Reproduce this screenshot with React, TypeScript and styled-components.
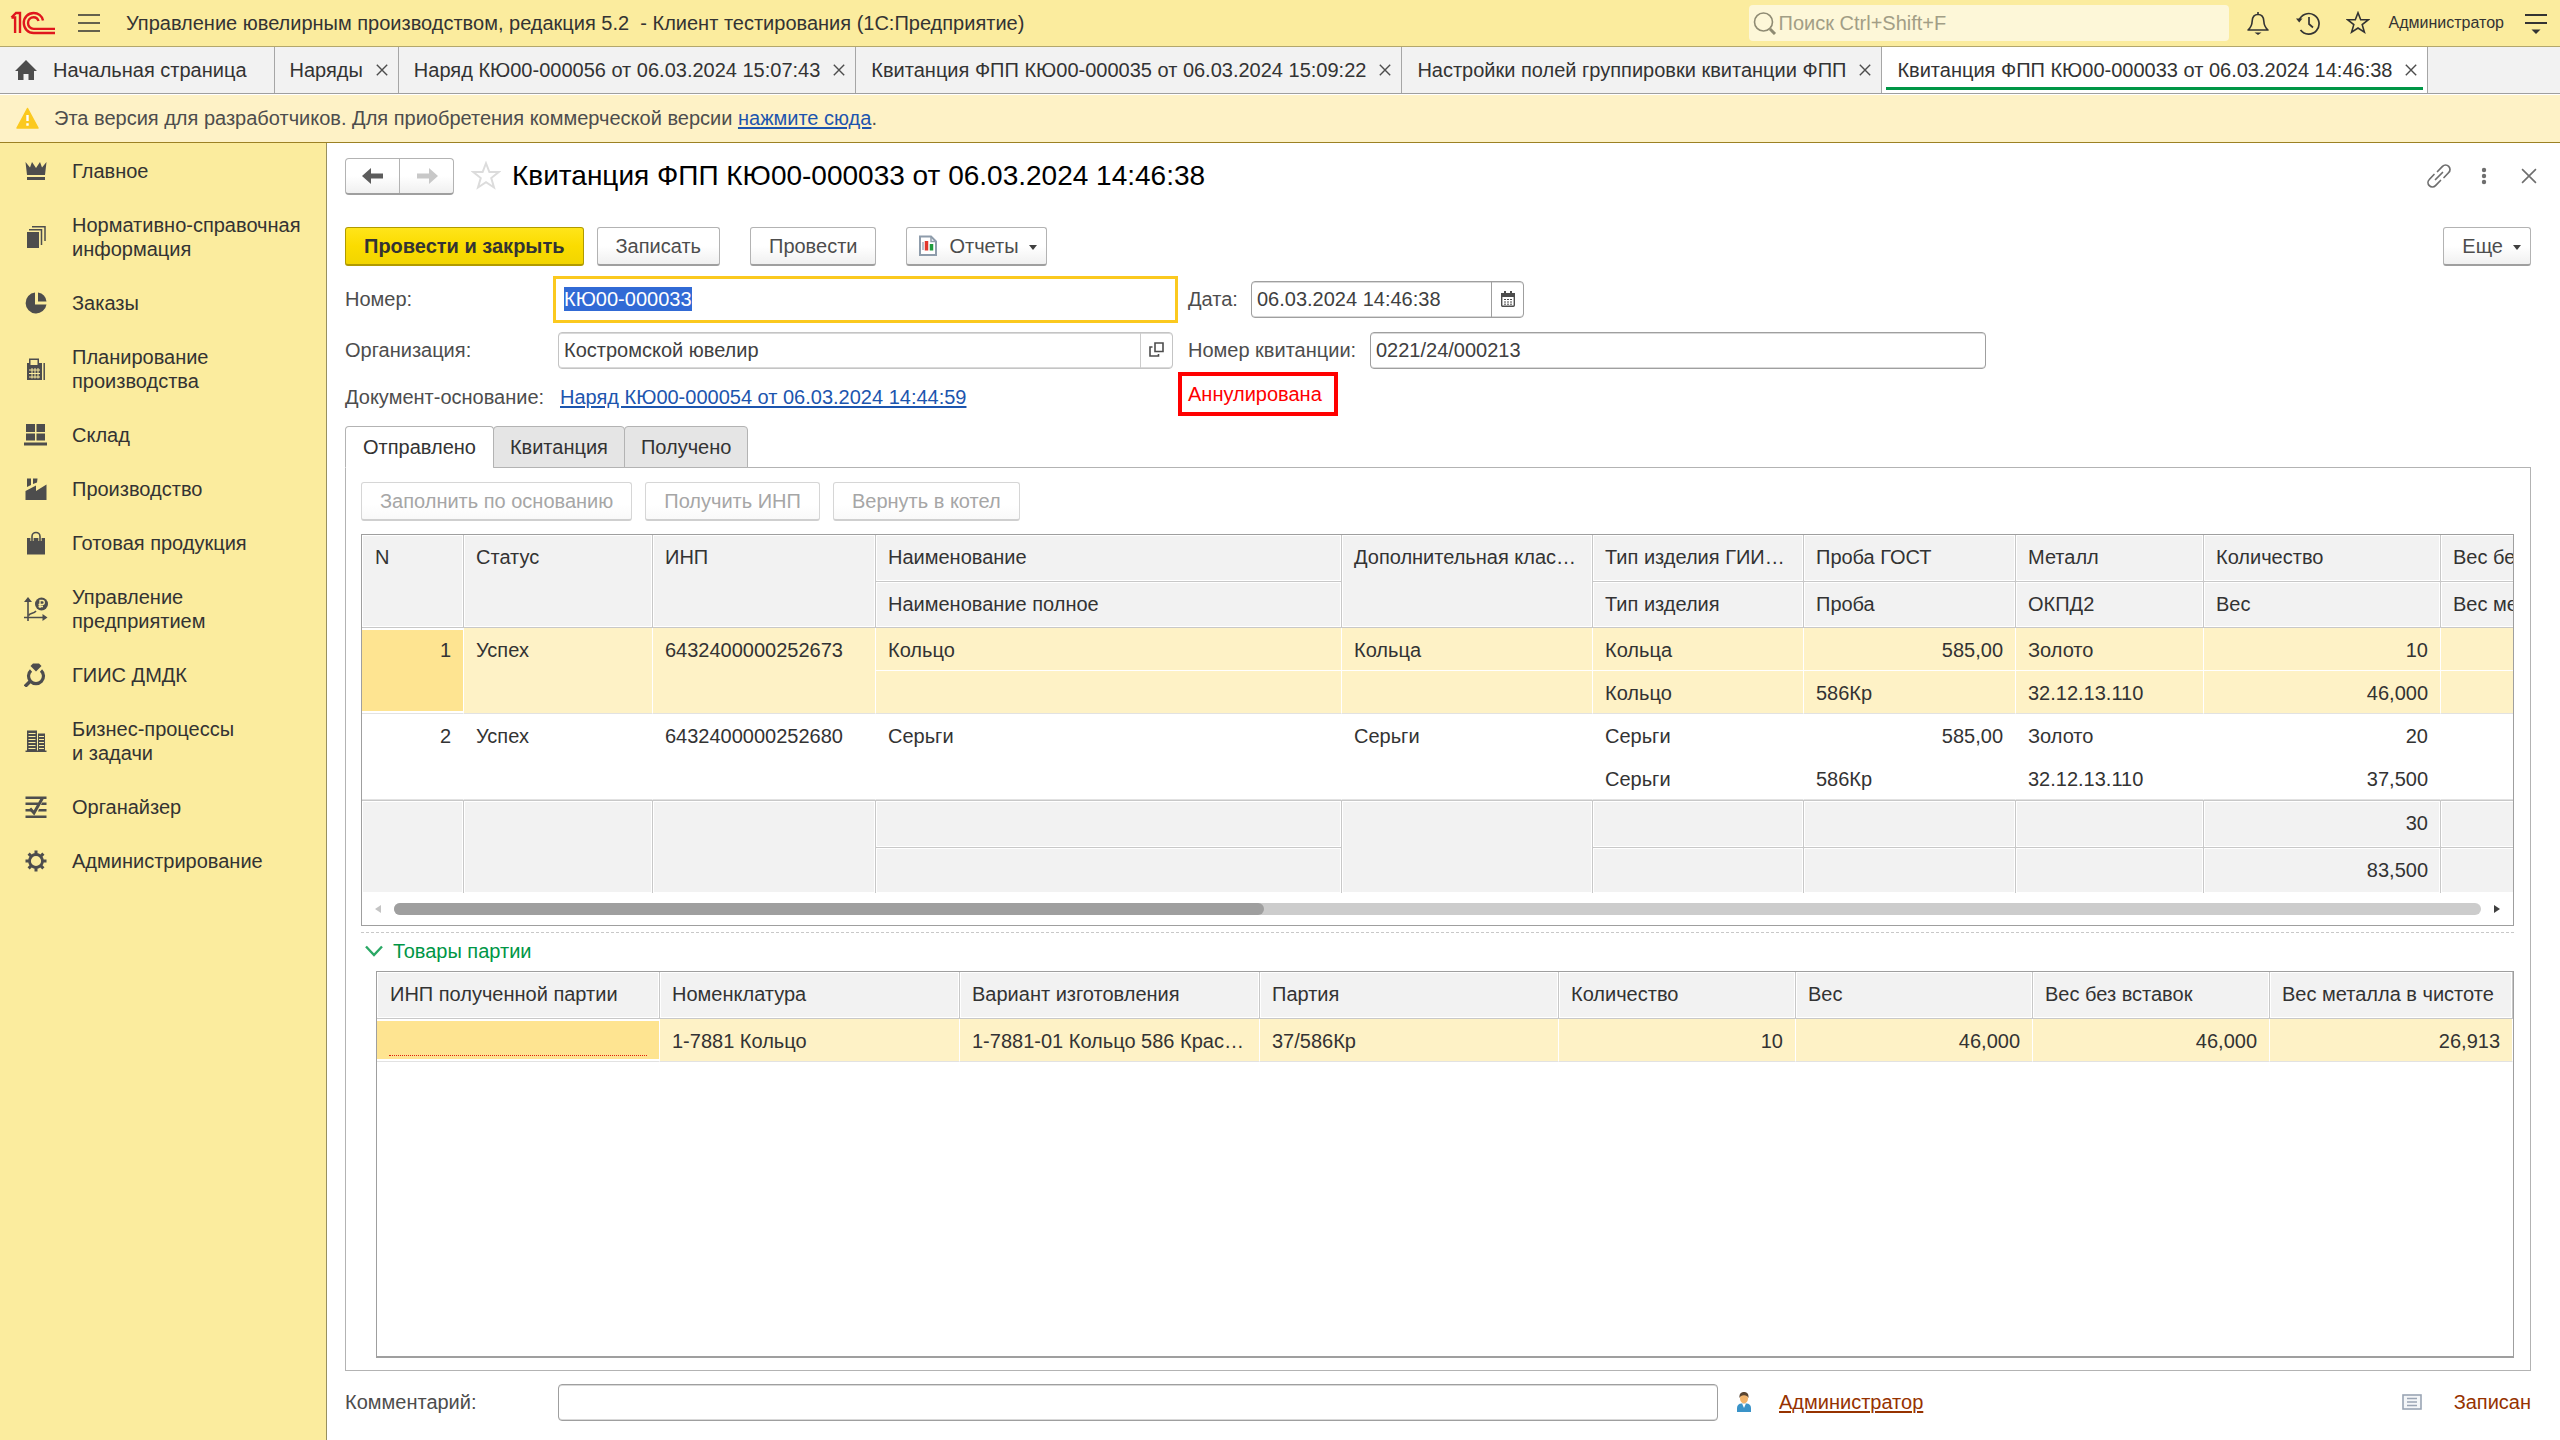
import React, { useEffect, useRef } from "react";
import styled, { createGlobalStyle, css } from "styled-components";

const GlobalStyle = createGlobalStyle`
  *, *::before, *::after { box-sizing: border-box; }
  body {
    margin: 0;
    background: #fff;
    color: #333;
    font: 20px/24px "Liberation Sans", Arial, sans-serif;
  }
  button, input { font: inherit; color: inherit; }
  button { padding: 0; border: 0; background: none; cursor: pointer; }
  svg { display: block; flex: none; }
`;

const Page = styled.div`
  display: flex;
  flex-direction: column;
  min-height: 100vh;
`;

/* ---------- top bar ---------- */

const TopBar = styled.header`
  display: flex;
  align-items: center;
  height: 47px;
  padding: 0 12px 0 10px;
  background: #fbec9e;
  border-bottom: 1px solid #b3a76c;
`;
const IconButton = styled.button<{ $w?: number }>`
  display: flex;
  align-items: center;
  justify-content: center;
  width: ${(p) => p.$w ?? 24}px;
  height: 28px;
  color: #333;
`;
const AppTitle = styled.h1`
  flex: 1;
  margin: 0 0 0 4px;
  font-size: 20px;
  font-weight: 400;
  white-space: pre;
`;
const Search = styled.label`
  display: flex;
  align-items: center;
  width: 480px;
  height: 36px;
  padding-left: 4px;
  border-radius: 4px;
  background: #fdf7d8;
  color: #8f8b73;
`;
const SearchInput = styled.input`
  flex: 1;
  min-width: 0;
  padding: 0 0 0 2px;
  border: 0;
  outline: 0;
  background: transparent;
  &::placeholder { color: #a29e86; opacity: 1; }
`;
const TopActions = styled.div`
  display: flex;
  align-items: center;
  gap: 26px;
  margin-left: 17px;
`;
const UserButton = styled.button`
  margin: 0 -6px 0 -7px;
  font-size: 16px;
  white-space: nowrap;
`;

/* ---------- window tabs ---------- */

const WindowTabs = styled.nav`
  display: flex;
  height: 47px;
  background: #f2f2f2;
  border-bottom: 1px solid #9f9f9f;
`;
const WindowTab = styled.div<{ $active?: boolean; $home?: boolean }>`
  position: relative;
  display: flex;
  align-items: center;
  gap: ${(p) => (p.$home ? 16 : 13)}px;
  padding: 0 ${(p) => (p.$home ? "27px 0 15px" : "10px 0 15px")};
  border-right: 1px solid #a6a6a6;
  background: ${(p) => (p.$active ? "#fff" : "transparent")};
  ${(p) =>
    p.$active &&
    css`
      &::after {
        content: "";
        position: absolute;
        left: 4px;
        right: 4px;
        bottom: 3px;
        height: 3px;
        background: #009646;
      }
    `}
`;
const TabLabel = styled.button`
  white-space: nowrap;
`;
const CloseTab = styled.button`
  width: 12px;
  height: 12px;
  color: #4d4d4d;
`;

/* ---------- banner ---------- */

const Banner = styled.div`
  display: flex;
  align-items: center;
  gap: 15px;
  height: 48px;
  margin-top: 1px;
  padding: 0 16px 2px;
  background: #fef2c6;
  border-bottom: 1px solid #9c8124;
  color: #4d4d4d;
`;
const Link = styled.a<{ $tone?: string }>`
  color: ${(p) => p.$tone ?? "#1c55ae"};
  text-decoration: underline;
  text-decoration-thickness: 2px;
  text-underline-offset: 2px;
  white-space: nowrap;
`;

/* ---------- body ---------- */

const Body = styled.div`
  flex: 1;
  display: flex;
`;
const Sidebar = styled.nav`
  flex: none;
  width: 327px;
  padding-top: 1px;
  background: #fbec9e;
  border-right: 1px solid #98905f;
`;
const SideItem = styled.button`
  display: flex;
  align-items: center;
  gap: 24px;
  width: 100%;
  padding: 15px 20px 15px 24px;
  text-align: left;
  white-space: pre;
  & > svg { color: #4d4d4d; }
`;
const Form = styled.main`
  flex: 1;
  min-width: 0;
  display: flex;
  flex-direction: column;
  padding: 15px 29px 19px 18px;
  color: #4d4d4d;
`;
const FormHeader = styled.div`
  display: flex;
  align-items: center;
  height: 36px;
`;
const NavPair = styled.div`
  display: flex;
  width: 109px;
  height: 37px;
  margin-right: 17px;
  border: 1px solid #b3b3b3;
  border-bottom: 2px solid #9f9f9f;
  border-radius: 4px;
  background: linear-gradient(#fff 50%, #f0f0f0);
`;
const NavButton = styled.button`
  flex: 1;
  display: flex;
  align-items: center;
  justify-content: center;
  color: #5c5c5c;
  &:disabled { color: #c8c8c8; }
  & + & { border-left: 1px solid #b3b3b3; }
`;
const FormTitle = styled.h2`
  flex: 1;
  margin: 0 0 0 11px;
  color: #000;
  font-size: 28px;
  line-height: 32px;
  font-weight: 400;
`;
const HeaderTools = styled.div`
  display: flex;
  gap: 21px;
  margin-right: -10px;
  & button { color: #6e6e6e; }
`;
const CommandBar = styled.div<{ $inner?: boolean }>`
  display: flex;
  gap: ${(p) => (p.$inner ? 13 : 30)}px;
  margin-top: ${(p) => (p.$inner ? 0 : 33)}px;
`;
const CommandGroup = styled.div`
  display: flex;
  gap: 13px;
`;
const Button = styled.button<{ $primary?: boolean; $menu?: boolean; $icon?: boolean }>`
  display: flex;
  align-items: center;
  gap: 10px;
  height: 39px;
  padding: 0 ${(p) => (p.$menu || p.$icon ? 9 : 18)}px 0 ${(p) => (p.$icon ? 10 : 18)}px;
  border: 1px solid #b3b3b3;
  border-bottom: 2px solid #9f9f9f;
  border-radius: 3px;
  background: linear-gradient(#fff 50%, #f0f0f0);
  color: #4d4d4d;
  white-space: nowrap;
  ${(p) =>
    p.$primary &&
    css`
      border-color: #b09a00;
      background: linear-gradient(#ffe51a, #fbdc00 50%, #f2d500);
      color: #333;
      font-weight: 700;
    `}
  &:disabled {
    border-color: #d6d6d6;
    border-bottom-color: #cfcfcf;
    background: linear-gradient(#fff 60%, #f9f9f9);
    color: #a6a6a6;
  }
`;
const Spacer = styled.span`
  flex: 1;
`;

/* ---------- fields ---------- */

const Fields = styled.div`
  display: grid;
  grid-template-columns: 828px 1fr;
  column-gap: 15px;
  row-gap: 14px;
  margin-top: 15px;
`;
const Field = styled.div`
  display: flex;
  align-items: center;
`;
const Label = styled.label<{ $w?: number }>`
  flex: none;
  width: ${(p) => (p.$w ? p.$w + "px" : "auto")};
  padding-bottom: 2px;
  white-space: nowrap;
`;
const InputBox = styled.div<{ $w?: number; $soft?: boolean; $focus?: boolean }>`
  display: flex;
  ${(p) => (p.$w ? `width: ${p.$w}px;` : "flex: 1;")}
  height: 37px;
  border: 1px solid ${(p) => (p.$soft ? "#c4c4c4" : "#9f9f9f")};
  border-radius: 4px;
  background: #fff;
  box-shadow: inset 0 1px #d9d9d9, inset 0 -1px #d9d9d9;
  ${(p) =>
    p.$focus &&
    css`
      border-color: transparent;
      border-radius: 0;
      box-shadow: none;
      outline: 3px solid #fbc91f;
      outline-offset: 2px;
    `}
`;
const TextInput = styled.input`
  flex: 1;
  min-width: 0;
  padding: 0 5px 1px;
  border: 0;
  outline: 0;
  background: transparent;
  color: #404040;
  &::selection { background: rgba(47, 104, 212, 0.99); color: #fff; }
`;
const InputAddon = styled.button<{ $soft?: boolean }>`
  display: flex;
  align-items: center;
  justify-content: center;
  width: 32px;
  padding-bottom: 2px;
  border-left: 1px solid ${(p) => (p.$soft ? "#ccc" : "#9f9f9f")};
  color: #4d4d4d;
`;
const StatusRow = styled.div`
  display: grid;
  grid-template-columns: 833px 1fr;
  margin-top: 3px;
`;
const BasisField = styled.div`
  display: flex;
  align-items: baseline;
  padding-top: 13px;
`;
const StatusBadge = styled.span`
  justify-self: start;
  padding: 6px 12px 6px 6px;
  height: 44px;
  border: 4px solid #f00;
  line-height: 24px;
  color: #f00;
`;

/* ---------- page tabs and panel ---------- */

const PageTabs = styled.div`
  position: relative;
  display: flex;
  margin: 10px 0 -1px;
`;
const PageTab = styled.button<{ $active?: boolean }>`
  height: 42px;
  padding: 0 ${(p) => (p.$active ? 17 : 16)}px;
  border: 1px solid #b3b3b3;
  border-bottom-color: ${(p) => (p.$active ? "#fff" : "#b3b3b3")};
  border-radius: 4px 4px 0 0;
  background: ${(p) => (p.$active ? "#fff" : "#e5e5e5")};
  color: #333;
  & + & { margin-left: -1px; }
`;
const Panel = styled.section`
  flex: 1;
  display: flex;
  flex-direction: column;
  padding: 14px 16px 12px 15px;
  border: 1px solid #b3b3b3;
`;
const GridFrame = styled.div<{ $fill?: boolean }>`
  ${(p) => p.$fill && "flex: 1; margin-left: 15px;"}
  margin-top: ${(p) => (p.$fill ? 8 : 13)}px;
  overflow: hidden;
  border: 1px solid #9f9f9f;
  ${(p) => p.$fill && "border-bottom-width: 2px;"}
`;
const Table = styled.table<{ $full?: boolean }>`
  width: ${(p) => (p.$full ? "100%" : "2316px")};
  table-layout: fixed;
  border-spacing: 0;
  color: #333;
`;
const cell = css`
  padding: 10px 12px 0;
  overflow: hidden;
  text-overflow: ellipsis;
  white-space: nowrap;
  vertical-align: top;
  font-weight: 400;
  line-height: 24px;
`;
const Th = styled.th<{ $second?: boolean }>`
  ${cell}
  height: ${(p) => (p.$second ? 46 : 47)}px;
  text-align: left;
  background: #f2f2f2;
  border-right: 1px solid #c8c8c8;
  border-bottom: 1px solid #c8c8c8;
  box-shadow: inset 0 0 0 1px #fff;
  &:first-child { padding-left: ${(p) => (p.$second ? 12 : 13)}px; }
`;
const Td = styled.td<{
  $num?: boolean;
  $picked?: boolean;
  $current?: boolean;
  $last?: boolean;
}>`
  ${cell}
  height: 43px;
  text-align: ${(p) => (p.$num ? "right" : "left")};
  background: ${(p) => (p.$current ? "#fee491" : p.$picked ? "#fef2c6" : "#fff")};
  border-right: 1px solid #fff;
  border-bottom: 1px solid ${(p) => (p.$last ? "#e2e2e2" : "#fff")};
  ${(p) => p.$current && "box-shadow: inset 0 2px #fff, inset 0 -2px #fff;"}
`;
const FootTd = styled.td<{ $upper?: boolean }>`
  ${cell}
  height: ${(p) => (p.$upper ? 47 : 46)}px;
  text-align: right;
  background: #f2f2f2;
  border-right: 1px solid #c8c8c8;
  border-top: 1px solid #c8c8c8;
  box-shadow: inset 0 0 0 1px #fff;
`;
const EmptyMark = styled.div`
  height: 27px;
  border-bottom: 1px dotted #e02010;
`;
const ScrollBar = styled.div`
  display: flex;
  align-items: center;
  gap: 13px;
  height: 32px;
  padding: 0 13px;
`;
const ScrollTrack = styled.div`
  flex: 1;
  height: 12px;
  border-radius: 6px;
  background: #ccc;
`;
const ScrollThumb = styled.div`
  width: 870px;
  max-width: 100%;
  height: 12px;
  border-radius: 6px;
  background: #9f9f9f;
`;
const Splitter = styled.div`
  margin-top: 6px;
  border-top: 1px dashed #c8c8c8;
`;
const GroupToggle = styled.button`
  display: flex;
  align-items: center;
  gap: 10px;
  margin: 6px 0 0 4px;
  color: #009646;
`;

/* ---------- footer ---------- */

const FooterRow = styled.div`
  display: flex;
  align-items: center;
  margin-top: 13px;
`;
const CommentBox = styled(InputBox)`
  flex: 1;
  max-width: 1160px;
`;
const Author = styled.span`
  display: flex;
  align-items: center;
  gap: 26px;
  margin-left: 17px;
  padding-bottom: 2px;
`;
const SavedState = styled.span`
  display: flex;
  align-items: center;
  gap: 32px;
  margin-left: auto;
  padding-bottom: 2px;
  color: #963200;
`;

/* ---------- icons ---------- */

const Logo = () => (
  <svg width="46" height="24" viewBox="0 0 46 24" fill="none" stroke="#e0161d" strokeWidth="2.4">
    <path d="M1.500 6.500h3.600V22M1.500 6.500 6 2h4v20" />
    <path d="M33 9.500C32 4.800 28 2 23.700 2 18 2 13.800 6.500 13.800 12S18 22 23.700 22H45" />
    <path d="M28.500 10C27.800 7.500 26 6.200 23.700 6.200 20.400 6.200 18 8.800 18 12S20.400 17.900 23.700 17.900H45" />
  </svg>
);
const Burger = () => (
  <svg width="22" height="18" viewBox="0 0 22 18" stroke="#333" strokeWidth="1.6">
    <path d="M0 1h22M0 9h22M0 17h22" />
  </svg>
);
const SearchIcon = () => (
  <svg width="24" height="24" viewBox="0 0 24 24" fill="none" stroke="#8f8b73" strokeWidth="1.600">
    <circle cx="10.500" cy="11" r="9" />
    <path d="M17 18l5 5" strokeWidth="3" />
  </svg>
);
const Bell = () => (
  <svg width="24" height="24" viewBox="0 0 24 24" fill="none" stroke="#333" strokeWidth="1.600" strokeLinejoin="round">
    <path d="M2 19c3-2.500 4-5 4.200-9C6.400 6 8.500 3.500 12 3.500S17.600 6 17.800 10c.2 4 1.200 6.500 4.200 9z" />
    <path d="M12 1v2.500" />
    <path d="M8.500 21.500h7L12 24z" fill="#333" stroke="none" />
  </svg>
);
const History = () => (
  <svg width="24" height="24" viewBox="0 0 24 24" fill="none" stroke="#333" strokeWidth="1.700">
    <path d="M3 9.500A10.300 10.300 0 1 1 4.500 19" />
    <path d="M13 6v7l4 3.500" />
    <path d="M0 7.500h6.500L3.200 11.500z" fill="#333" stroke="none" />
  </svg>
);
const Star = ({ color = "#333", size = 24 }: { color?: string; size?: number }) => (
  <svg width={size} height={size} viewBox="0 0 24 24" fill="none" stroke={color} strokeWidth="1.600">
    <path d="M12 1.800l2.700 7h7.500l-6 4.800 2.200 7.600L12 17l-6.400 4.200 2.200-7.600-6-4.800h7.500z" />
  </svg>
);
const PanelMenu = () => (
  <svg width="24" height="24" viewBox="0 0 24 24" stroke="#333" strokeWidth="1.800">
    <path d="M1 4h22M1 12h22" />
    <path d="M7.500 18.500h9L12 23z" fill="#333" stroke="none" />
  </svg>
);
const Cross = ({ size = 12, width = 1.4 }: { size?: number; width?: number }) => (
  <svg width={size} height={size} viewBox="0 0 12 12" stroke="currentColor" strokeWidth={width}>
    <path d="M.8.8l10.400 10.400M11.200.8L.8 11.200" />
  </svg>
);
const Home = () => (
  <svg width="22" height="20" viewBox="0 0 22 20" fill="#4d4d4d">
    <path d="M11 0 22 11h-3v9h-5.500v-6h-5v6H3v-9H0z" />
  </svg>
);
const Warning = () => (
  <svg width="23" height="22" viewBox="0 0 23 22">
    <path d="M11.500 1.500 22 21H1z" fill="#fbc91f" stroke="#fbc91f" strokeWidth="1.500" strokeLinejoin="round" />
    <path d="M11.500 8v6M11.500 16.200v2.600" stroke="#fff" strokeWidth="2.400" />
  </svg>
);
const Arrow = ({ flip }: { flip?: boolean }) => (
  <svg width="22" height="16" viewBox="0 0 22 16" fill="currentColor">
    <path d={flip ? "M22 8 13 0v5.500H1v5h12V16z" : "M0 8l9-8v5.500h12v5H9V16z"} />
  </svg>
);
const LinkIcon = () => (
  <svg width="26" height="26" viewBox="0 0 26 26" fill="none" stroke="currentColor" strokeWidth="1.700" strokeLinecap="round">
    <path d="M11.500 8.500l5-5.200a4.300 4.300 0 0 1 6.200 6.200l-4.700 5" />
    <path d="M14.500 17.500l-5 5.200a4.300 4.300 0 0 1-6.200-6.200l4.700-5" />
    <path d="M9.500 16.500l7-7" />
  </svg>
);
const Dots = () => (
  <svg width="24" height="24" viewBox="0 0 24 24" fill="currentColor">
    <circle cx="12" cy="6" r="2.200" />
    <circle cx="12" cy="12" r="2.200" />
    <circle cx="12" cy="18" r="2.200" />
  </svg>
);
const Caret = () => (
  <svg width="8" height="8" viewBox="0 0 8 8" fill="#404040">
    <path d="M0 3h8L4 8z" />
  </svg>
);
const ReportIcon = () => (
  <svg width="22" height="24" viewBox="0 0 22 24" fill="none">
    <path d="M3 2.500h11l5 5V21H3z" fill="#fff" stroke="#8e9cab" strokeWidth="2" />
    <path d="M14 2.500v5h5" stroke="#8e9cab" strokeWidth="1.500" />
    <path d="M6 8v8" stroke="#b9c3cd" strokeWidth="2" />
    <path d="M9.500 7v9.500" stroke="#e0372c" strokeWidth="3.500" />
    <path d="M14.500 10v6.500" stroke="#1e9b3c" strokeWidth="3.500" />
  </svg>
);
const OpenIcon = () => (
  <svg width="15" height="15" viewBox="0 0 15 15" fill="none" stroke="currentColor" strokeWidth="1.600">
    <path d="M6 1h8v8.500H6zM3.500 5H1v9h8.500v-2" />
  </svg>
);
const CalendarIcon = () => (
  <svg width="14" height="16" viewBox="0 0 14 16">
    <rect x=".7" y="2.700" width="12.600" height="12.600" rx="1" fill="#fff" stroke="#4d4d4d" strokeWidth="1.400" />
    <path d="M0 2h14v4H0zM3 0h2v3H3zM9 0h2v3H9z" fill="#4d4d4d" />
    <path d="M3 8.500h8M3 11h8M3 13.200h8" stroke="#4d4d4d" strokeWidth="1" strokeDasharray="2 1" />
  </svg>
);
const Chevron = () => (
  <svg width="18" height="12" viewBox="0 0 18 12" fill="none" stroke="#2aa865" strokeWidth="2.400">
    <path d="M1 1.500l8 8.500 8-8.500" />
  </svg>
);
const ScrollArrow = ({ flip }: { flip?: boolean }) => (
  <svg width="6" height="8" viewBox="0 0 6 8" fill={flip ? "#404040" : "#c4c4c4"}>
    <path d={flip ? "M0 0l6 4-6 4z" : "M6 0 0 4l6 4z"} />
  </svg>
);
const Person = () => (
  <svg width="18" height="20" viewBox="0 0 18 20">
    <path d="M2 20v-4c0-3 2-4.500 4.500-4.500h5C14 11.500 16 13 16 16v4z" fill="#3a93c8" />
    <path d="M7 11.500h4L9 16z" fill="#fff" />
    <ellipse cx="9" cy="6.500" rx="4" ry="5" fill="#f1b36b" />
    <path d="M4.500 6C4 2 6 0 9 0s5 2 4.500 6c-1-2-2-2.800-4.500-2.800S5.500 4 4.500 6z" fill="#5a4532" />
  </svg>
);
const ListIcon = () => (
  <svg width="20" height="16" viewBox="0 0 20 16" fill="none">
    <rect x="1" y="1" width="18" height="14" fill="#f4f6f8" stroke="#9aa5b4" strokeWidth="1.600" />
    <path d="M5 4.500h10M5 8h10M5 11.500h10" stroke="#9aa5b4" strokeWidth="1.400" />
  </svg>
);

const SideIcon = ({ children }: { children: React.ReactNode }) => (
  <svg width="24" height="24" viewBox="0 0 24 24" fill="currentColor" aria-hidden="true">
    {children}
  </svg>
);

const sections: { label: string; icon: React.ReactNode }[] = [
  {
    label: "Главное",
    icon: <path d="M1.500 3 6 8.500 8 3l4 6 4-6 2 5.500L22.500 3 21 16H3zM3 18h18v3H3z" />,
  },
  {
    label: "Нормативно-справочная\nинформация",
    icon: (
      <>
        <path d="M3 7h12v16H3z" />
        <path d="M5 4.800h12.500V20M8 1.800h13V16" fill="none" stroke="currentColor" strokeWidth="1.500" />
      </>
    ),
  },
  {
    label: "Заказы",
    icon: (
      <>
        <path d="M11 1.500A10.500 10.500 0 1 0 22.500 13.500H11z" />
        <path d="M14 1.500A10.500 10.500 0 0 1 22.500 10.500H14z" />
      </>
    ),
  },
  {
    label: "Планирование\nпроизводства",
    icon: (
      <>
        <path d="M3 6h2V1.500h10V6h3v17H3zM6.500 3v5h7V3z" fillRule="evenodd" />
        <path d="M5 13h11M5 16.500h11M5 20h11M8 11v10.500M11 11v10.500M14 11v10.500" stroke="#fbec9e" strokeWidth="1" />
        <path d="M20.200 6v17" stroke="currentColor" strokeWidth="1.500" />
      </>
    ),
  },
  {
    label: "Склад",
    icon: <path d="M2 1h9v8H2zM12.500 1H21v8h-8.500zM2 10.500h9v7H2zM12.500 10.500H21v7h-8.500zM0 19.500h23v3H0z" />,
  },
  {
    label: "Производство",
    icon: (
      <>
        <path d="M1.500 14 12 8.500V14l10.500-6.500V23h-21z" />
        <path d="M3 1.500h4V8L3 10zM9 1.500h4.500L13 5.500 9 7z" />
      </>
    ),
  },
  {
    label: "Готовая продукция",
    icon: (
      <>
        <path d="M3 7h18v16.500H3z" />
        <path d="M8 10V6a4 4 0 0 1 8 0v4" fill="none" stroke="#fbec9e" strokeWidth="3.200" />
        <path d="M8 10V5.500a4 4 0 0 1 8 0V10" fill="none" stroke="currentColor" strokeWidth="1.600" />
      </>
    ),
  },
  {
    label: "Управление\nпредприятием",
    icon: (
      <>
        <path d="M4 3v21M0 20.500h20" stroke="currentColor" strokeWidth="1.600" />
        <path d="M4 0 0 5h8zM23.500 20.500 18.500 17v7z" />
        <path d="M4.500 18.500c2-3 5-1.500 7.500-4.500" fill="none" stroke="currentColor" strokeWidth="1.600" />
        <circle cx="17.500" cy="7" r="6.500" />
        <path d="M16 11V3.500h2.300a1.900 1.900 0 0 1 0 4H14.500M14.500 9.500h4.500" fill="none" stroke="#fbec9e" strokeWidth="1.300" />
      </>
    ),
  },
  {
    label: "ГИИС ДМДК",
    icon: (
      <>
        <path d="M12 8.500 6.500 3 9 .5h6L17.500 3z" />
        <path d="M7 7.500a7.500 7.500 0 1 0 10 0" fill="none" stroke="currentColor" strokeWidth="3.200" />
        <path d="M7 17.500 1 23.500" stroke="currentColor" strokeWidth="3.400" />
      </>
    ),
  },
  {
    label: "Бизнес-процессы\nи задачи",
    icon: (
      <>
        <path d="M3 1.500h10V22H3zM14 4.500h7V22h-7zM1.500 21.500h21V23h-21z" />
        <path d="M4.500 4.500h7M4.500 7.500h7M4.500 10.500h7M4.500 13.500h7M4.500 16.500h7M4.500 19.500h7M15 7.500h5M15 10.500h5M15 13.500h5M15 16.500h5M15 19.500h5" stroke="#fbec9e" strokeWidth="1.200" />
      </>
    ),
  },
  {
    label: "Органайзер",
    icon: (
      <>
        <path d="M1.500 1.500h21V4h-21zM1.500 7.500H14V10H1.500zM18 7.500h4.500V10H17zM1.500 14H7v2.500H1.500zM15 14h7.500v2.500H14zM1.500 20.500h21V23h-21z" />
        <path d="M6 13.500 10 18 18.500 3" fill="none" stroke="currentColor" strokeWidth="3" />
      </>
    ),
  },
  {
    label: "Администрирование",
    icon: (
      <>
        <circle cx="12" cy="12" r="6.500" fill="none" stroke="currentColor" strokeWidth="2.800" />
        <path
          d="M12 1.500v4M12 18.500v4M1.500 12h4M18.500 12h4M4.600 4.600l2.800 2.800M16.600 16.600l2.800 2.800M4.600 19.400l2.800-2.800M16.600 7.400l2.800-2.800"
          stroke="currentColor"
          strokeWidth="3"
        />
      </>
    ),
  },
];

const openWindows = [
  "Наряды",
  "Наряд КЮ00-000056 от 06.03.2024 15:07:43",
  "Квитанция ФПП КЮ00-000035 от 06.03.2024 15:09:22",
  "Настройки полей группировки квитанции ФПП",
  "Квитанция ФПП КЮ00-000033 от 06.03.2024 14:46:38",
];

const itemColumns = [102, 189, 223, 466, 251, 211, 212, 188, 237, 237];
const lotColumns = [283, 300, 300, 299, 237, 237, 237];

const items = [
  {
    n: "1", status: "Успех", inp: "6432400000252673", name: "Кольцо", cls: "Кольца",
    giis: "Кольца", type: "Кольцо", gost: "585,00", fineness: "586Кр",
    metal: "Золото", okpd: "32.12.13.110", qty: "10", weight: "46,000",
  },
  {
    n: "2", status: "Успех", inp: "6432400000252680", name: "Серьги", cls: "Серьги",
    giis: "Серьги", type: "Серьги", gost: "585,00", fineness: "586Кр",
    metal: "Золото", okpd: "32.12.13.110", qty: "20", weight: "37,500",
  },
];

const Columns = ({ widths }: { widths: number[] }) => (
  <colgroup>
    {widths.map((w, i) => (
      <col key={i} width={w} />
    ))}
  </colgroup>
);

function ItemsTable() {
  return (
    <Table>
      <Columns widths={itemColumns} />
      <thead>
        <tr>
          <Th rowSpan={2}>N</Th>
          <Th rowSpan={2}>Статус</Th>
          <Th rowSpan={2}>ИНП</Th>
          <Th>Наименование</Th>
          <Th rowSpan={2}>Дополнительная клас…</Th>
          <Th>Тип изделия ГИИ…</Th>
          <Th>Проба ГОСТ</Th>
          <Th>Металл</Th>
          <Th>Количество</Th>
          <Th>Вес без вставок</Th>
        </tr>
        <tr>
          <Th $second>Наименование полное</Th>
          <Th $second>Тип изделия</Th>
          <Th $second>Проба</Th>
          <Th $second>ОКПД2</Th>
          <Th $second>Вес</Th>
          <Th $second>Вес металла</Th>
        </tr>
      </thead>
      <tbody>
        {items.map((r, i) => {
          const picked = i === 0;
          return (
            <React.Fragment key={r.n}>
              <tr>
                <Td rowSpan={2} $num $last $picked={picked} $current={picked}>{r.n}</Td>
                <Td rowSpan={2} $last $picked={picked}>{r.status}</Td>
                <Td rowSpan={2} $last $picked={picked}>{r.inp}</Td>
                <Td $picked={picked}>{r.name}</Td>
                <Td $picked={picked}>{r.cls}</Td>
                <Td $picked={picked}>{r.giis}</Td>
                <Td $num $picked={picked}>{r.gost}</Td>
                <Td $picked={picked}>{r.metal}</Td>
                <Td $num $picked={picked}>{r.qty}</Td>
                <Td $picked={picked} />
              </tr>
              <tr>
                <Td $last $picked={picked} />
                <Td $last $picked={picked} />
                <Td $last $picked={picked}>{r.type}</Td>
                <Td $last $picked={picked}>{r.fineness}</Td>
                <Td $last $picked={picked}>{r.okpd}</Td>
                <Td $last $num $picked={picked}>{r.weight}</Td>
                <Td $last $picked={picked} />
              </tr>
            </React.Fragment>
          );
        })}
      </tbody>
      <tfoot>
        <tr>
          <FootTd rowSpan={2} />
          <FootTd rowSpan={2} />
          <FootTd rowSpan={2} />
          <FootTd $upper />
          <FootTd rowSpan={2} />
          <FootTd $upper />
          <FootTd $upper />
          <FootTd $upper />
          <FootTd $upper>30</FootTd>
          <FootTd $upper />
        </tr>
        <tr>
          <FootTd />
          <FootTd />
          <FootTd />
          <FootTd />
          <FootTd>83,500</FootTd>
          <FootTd />
        </tr>
      </tfoot>
    </Table>
  );
}

function LotTable() {
  return (
    <Table $full>
      <Columns widths={lotColumns} />
      <thead>
        <tr>
          <Th>ИНП полученной партии</Th>
          <Th>Номенклатура</Th>
          <Th>Вариант изготовления</Th>
          <Th>Партия</Th>
          <Th>Количество</Th>
          <Th>Вес</Th>
          <Th>Вес без вставок</Th>
          <Th>Вес металла в чистоте</Th>
        </tr>
      </thead>
      <tbody>
        <tr>
          <Td $last $picked $current><EmptyMark /></Td>
          <Td $last $picked>1-7881 Кольцо</Td>
          <Td $last $picked>1-7881-01 Кольцо 586 Крас…</Td>
          <Td $last $picked>37/586Кр</Td>
          <Td $last $picked $num>10</Td>
          <Td $last $picked $num>46,000</Td>
          <Td $last $picked $num>46,000</Td>
          <Td $last $picked $num>26,913</Td>
        </tr>
      </tbody>
    </Table>
  );
}

export default function App() {
  const numberRef = useRef<HTMLInputElement>(null);

  useEffect(() => {
    numberRef.current?.focus();
    numberRef.current?.select();
  }, []);

  return (
    <Page>
      <GlobalStyle />
      <TopBar>
        <Logo />
        <IconButton $w={66} aria-label="Меню"><Burger /></IconButton>
        <AppTitle>{"Управление ювелирным производством, редакция 5.2  - Клиент тестирования (1С:Предприятие)"}</AppTitle>
        <Search>
          <SearchIcon />
          <SearchInput type="search" placeholder="Поиск Ctrl+Shift+F" aria-label="Поиск" />
        </Search>
        <TopActions>
          <IconButton aria-label="Уведомления"><Bell /></IconButton>
          <IconButton aria-label="История"><History /></IconButton>
          <IconButton aria-label="Избранное"><Star /></IconButton>
          <UserButton>Администратор</UserButton>
          <IconButton aria-label="Настройки"><PanelMenu /></IconButton>
        </TopActions>
      </TopBar>

      <WindowTabs>
        <WindowTab $home>
          <Home />
          <TabLabel>Начальная страница</TabLabel>
        </WindowTab>
        {openWindows.map((title, i) => (
          <WindowTab key={title} $active={i === openWindows.length - 1}>
            <TabLabel>{title}</TabLabel>
            <CloseTab aria-label="Закрыть"><Cross /></CloseTab>
          </WindowTab>
        ))}
      </WindowTabs>

      <Banner>
        <Warning />
        <span>
          Эта версия для разработчиков. Для приобретения коммерческой версии{" "}
          <Link href="#buy">нажмите сюда</Link>.
        </span>
      </Banner>

      <Body>
        <Sidebar>
          {sections.map((s) => (
            <SideItem key={s.label}>
              <SideIcon>{s.icon}</SideIcon>
              <span>{s.label}</span>
            </SideItem>
          ))}
        </Sidebar>

        <Form>
          <FormHeader>
            <NavPair>
              <NavButton aria-label="Назад"><Arrow /></NavButton>
              <NavButton aria-label="Вперед" disabled><Arrow flip /></NavButton>
            </NavPair>
            <IconButton $w={30} aria-label="В избранное"><Star color="#dcdcdc" size={30} /></IconButton>
            <FormTitle>Квитанция ФПП КЮ00-000033 от 06.03.2024 14:46:38</FormTitle>
            <HeaderTools>
              <IconButton aria-label="Ссылка"><LinkIcon /></IconButton>
              <IconButton aria-label="Еще"><Dots /></IconButton>
              <IconButton aria-label="Закрыть"><Cross size={16} width={1.2} /></IconButton>
            </HeaderTools>
          </FormHeader>

          <CommandBar>
            <CommandGroup>
              <Button $primary>Провести и закрыть</Button>
              <Button>Записать</Button>
            </CommandGroup>
            <Button>Провести</Button>
            <Button $icon><ReportIcon />Отчеты<Caret /></Button>
            <Spacer />
            <Button $menu>Еще<Caret /></Button>
          </CommandBar>

          <Fields>
            <Field>
              <Label $w={213} htmlFor="number">Номер:</Label>
              <InputBox $focus>
                <TextInput id="number" ref={numberRef} defaultValue="КЮ00-000033" />
              </InputBox>
            </Field>
            <Field>
              <Label $w={63} htmlFor="date">Дата:</Label>
              <InputBox $w={273}>
                <TextInput id="date" defaultValue="06.03.2024 14:46:38" />
                <InputAddon aria-label="Выбрать дату"><CalendarIcon /></InputAddon>
              </InputBox>
            </Field>
            <Field>
              <Label $w={213} htmlFor="org">Организация:</Label>
              <InputBox $soft>
                <TextInput id="org" defaultValue="Костромской ювелир" />
                <InputAddon $soft aria-label="Открыть"><OpenIcon /></InputAddon>
              </InputBox>
            </Field>
            <Field>
              <Label $w={182} htmlFor="receipt">Номер квитанции:</Label>
              <InputBox $w={616}>
                <TextInput id="receipt" defaultValue="0221/24/000213" />
              </InputBox>
            </Field>
          </Fields>
          <StatusRow>
            <BasisField>
              <Label as="span" $w={215}>Документ-основание:</Label>
              <Link href="#basis">Наряд КЮ00-000054 от 06.03.2024 14:44:59</Link>
            </BasisField>
            <StatusBadge>Аннулирована</StatusBadge>
          </StatusRow>

          <PageTabs role="tablist">
            <PageTab role="tab" aria-selected $active>Отправлено</PageTab>
            <PageTab role="tab">Квитанция</PageTab>
            <PageTab role="tab">Получено</PageTab>
          </PageTabs>
          <Panel>
            <CommandBar $inner>
              <Button disabled>Заполнить по основанию</Button>
              <Button disabled>Получить ИНП</Button>
              <Button disabled>Вернуть в котел</Button>
            </CommandBar>
            <GridFrame>
              <ItemsTable />
              <ScrollBar>
                <ScrollArrow />
                <ScrollTrack><ScrollThumb /></ScrollTrack>
                <ScrollArrow flip />
              </ScrollBar>
            </GridFrame>
            <Splitter />
            <GroupToggle aria-expanded><Chevron />Товары партии</GroupToggle>
            <GridFrame $fill>
              <LotTable />
            </GridFrame>
          </Panel>

          <FooterRow>
            <Label $w={213} htmlFor="comment">Комментарий:</Label>
            <CommentBox>
              <TextInput id="comment" />
            </CommentBox>
            <Author>
              <Person />
              <Link href="#user" $tone="#963200">Администратор</Link>
            </Author>
            <SavedState><ListIcon />Записан</SavedState>
          </FooterRow>
        </Form>
      </Body>
    </Page>
  );
}
